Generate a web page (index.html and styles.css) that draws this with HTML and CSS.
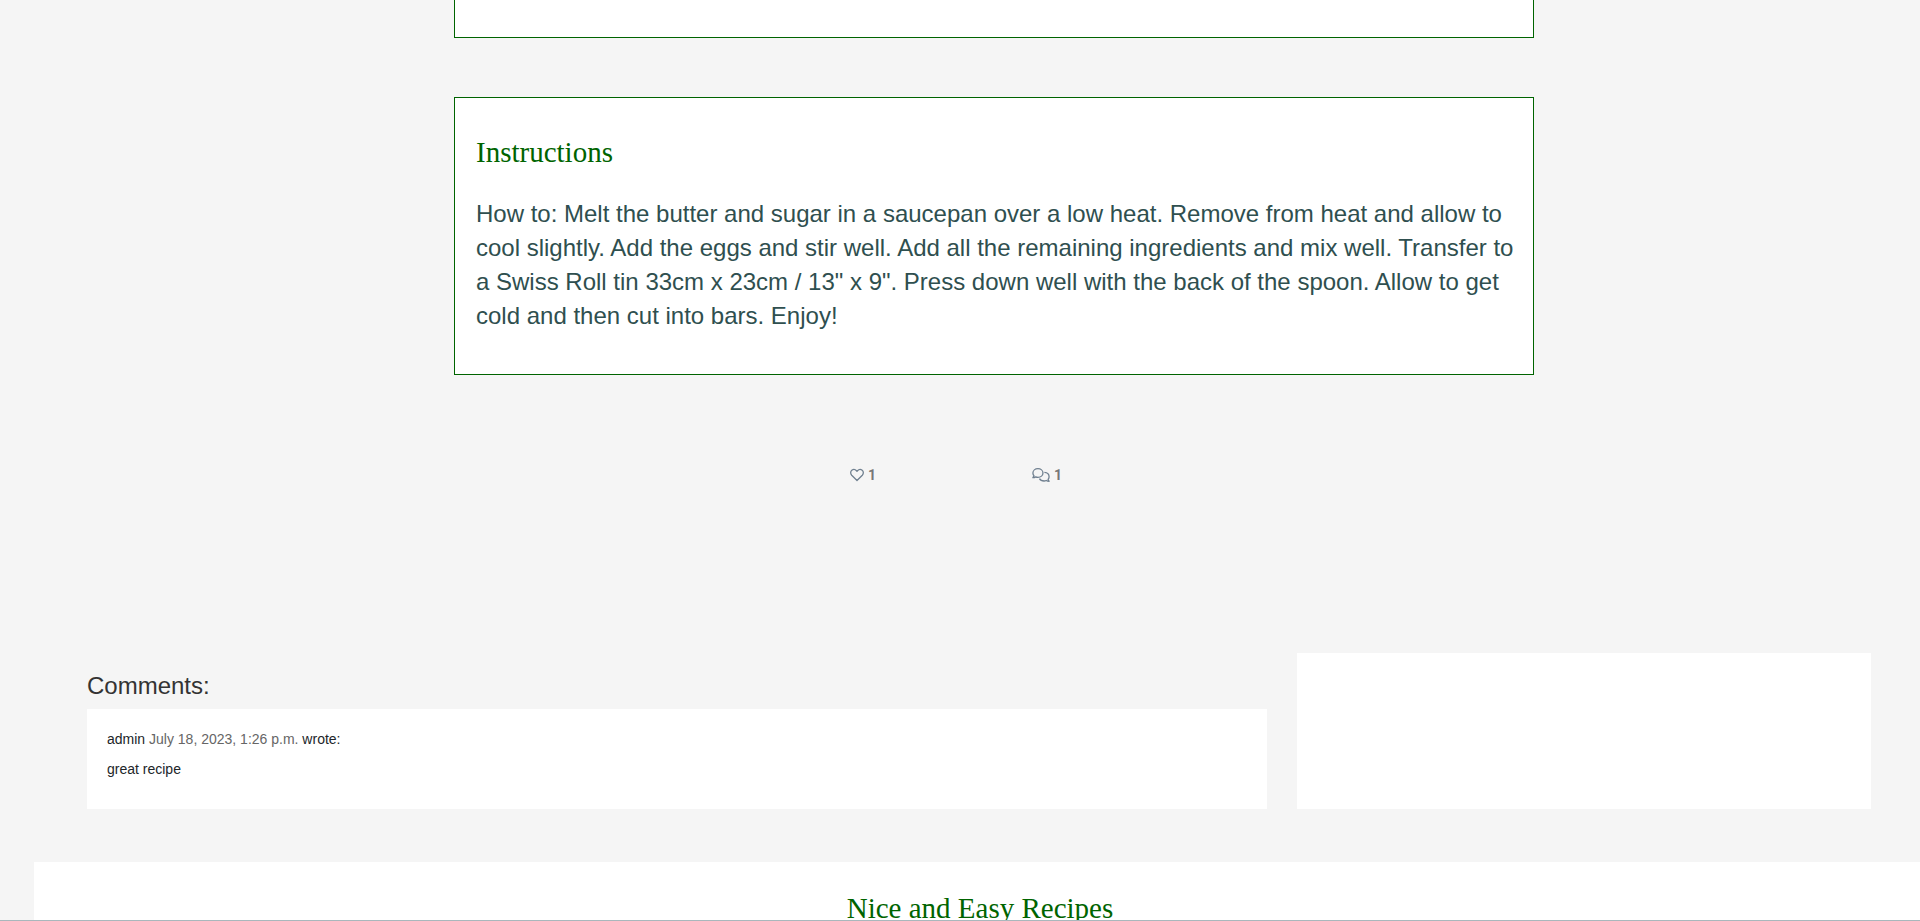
FILE: index.html
```html
<!DOCTYPE html>
<html lang="en">
<head>
<meta charset="utf-8">
<title>Recipe</title>
<link rel="stylesheet" href="styles.css">
</head>
<body>
<main class="page">
  <section class="panel panel-tail"></section>
  <section class="panel">
    <h2 class="heading">Instructions</h2>
    <p class="method">How to: Melt the butter and sugar in a saucepan over a low heat. Remove from heat and allow to cool slightly. Add the eggs and stir well. Add all the remaining ingredients and mix well. Transfer to a Swiss Roll tin 33cm x 23cm / 13" x 9". Press down well with the back of the spoon. Allow to get cold and then cut into bars. Enjoy!</p>
  </section>
  <div class="stats">
    <span class="stat">
      <svg class="icon" width="14" height="14" viewBox="0 0 512 512" aria-hidden="true"><path d="M256 458 62 265C10 210 14 122 66 82c54-42 128-30 172 18l18 20 18-20c44-48 118-60 172-18 52 40 56 128 4 183z"/></svg>
      <span>1</span>
    </span>
    <span class="stat">
      <svg class="icon" width="18" height="14" viewBox="0 0 640 512" aria-hidden="true"><path d="M208 24C106 24 24 94 24 184c0 38 14 70 38 98-8 28-20 48-38 70 40 0 74-10 104-28 26 12 52 18 80 18 102 0 184-68 184-158S310 24 208 24z"/><path d="M444 158c98 8 172 76 172 160 0 38-14 70-38 98 8 28 20 48 38 70-40 0-74-10-104-28-26 12-52 18-80 18-76 0-138-34-168-88"/></svg>
      <span>1</span>
    </span>
  </div>
  <div class="row">
    <section class="comments">
      <h3 class="comments-title">Comments:</h3>
      <article class="comment">
        <p class="line">admin <span class="date">July 18, 2023, 1:26 p.m.</span> wrote:</p>
        <p class="line">great recipe</p>
      </article>
    </section>
    <aside class="side"></aside>
  </div>
  <footer class="footer">
    <h2 class="heading">Nice and Easy Recipes</h2>
  </footer>
</main>
</body>
</html>
```
FILE: styles.css
```css
* { box-sizing: border-box; }
html { height: 100%; }
body {
  margin: 0;
  height: 100%;
  overflow: hidden;
  background: #f5f5f5;
  border-bottom: 1px solid #a9b7bc;
  color: #212529;
  font: 14px/20px "Liberation Sans", Arial, sans-serif;
}
h2, h3, p { margin: 0; }
.page {
  height: 100%;
  margin-left: 34px;
  overflow: hidden;
}
.panel {
  width: 1080px;
  max-width: 100%;
  margin: 0 0 59px 420px;
  padding: 36px 16px 41px 21px;
  background: #fff;
  border: 1px solid #006400;
}
.panel-tail { padding: 37px 0 0; border-top: 0; }
.heading {
  color: #006400;
  font: 400 29px/36px "Liberation Serif", Georgia, serif;
}
.method {
  margin-top: 27px;
  color: #2f4f4f;
  font-size: 24px;
  line-height: 34px;
}
.stats {
  display: flex;
  gap: 156px;
  margin: 90px 0 0 816px;
  color: #777;
}
.stat { display: flex; align-items: center; gap: 4px; font: 700 14px/20px Roboto, sans-serif; }
.icon { fill: none; stroke: #708090; stroke-width: 48; stroke-linejoin: round; }
.row {
  display: grid;
  grid-template-columns: 1180fr 574fr;
  gap: 30px;
  margin: 168px 49px 53px 53px;
}
.comments-title {
  padding: 16px 0 6px;
  color: #333;
  font-size: 24px;
  font-weight: 400;
  line-height: 34px;
}
.comment { background: #fff; padding: 20px 20px 30px; }
.line + .line { margin-top: 10px; }
.date { color: #666; }
.side { background: #fff; }
.footer { background: #fff; padding: 28px 0 28px 6px; text-align: center; }
```
